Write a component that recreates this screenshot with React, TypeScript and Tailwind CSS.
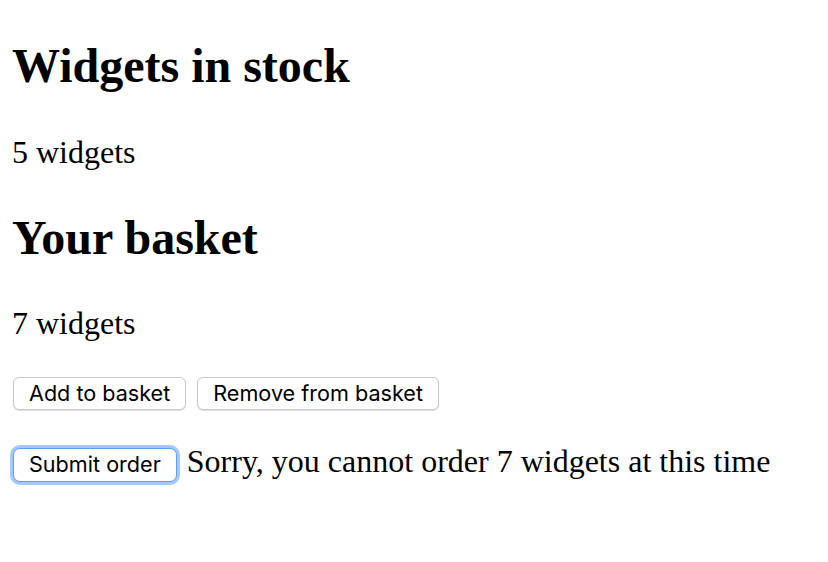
import React, { useState } from "react";

const serif = { fontFamily: '"Liberation Serif", "Times New Roman", serif' };

function Btn({ children, focused }: { children: React.ReactNode; focused?: boolean }) {
  return (
    <button
      className={
        focused
          ? "h-[34px] rounded-[7px] border border-[#5e9df2] bg-white px-[15px] text-[21.6px] leading-none text-black shadow-[0_0_0_3px_#a6c8f8]"
          : "h-[33px] rounded-[6px] border border-[#c9c9c9] bg-white px-[15px] text-[21.6px] leading-none text-black shadow-[0_1px_1px_rgba(0,0,0,0.12)]"
      }
      style={{ fontFamily: 'Inter, "Liberation Sans", sans-serif' }}
    >
      {children}
    </button>
  );
}

export default function App() {
  const [stock] = useState(5);
  const [basket] = useState(7);
  return (
    <div className="min-h-[562px] bg-white px-[12px] pt-[38px] text-black" style={serif}>
      <h1 className="text-[48px] font-bold leading-[56px]">Widgets in stock</h1>
      <p className="mt-[40px] text-[32px] leading-[37px]">{stock} widgets</p>
      <h1 className="mt-[39px] text-[48px] font-bold leading-[56px]">Your basket</h1>
      <p className="mt-[39px] text-[32px] leading-[37px]">{basket} widgets</p>
      <div className="mt-[35px] flex items-center gap-[11px] pl-[1px]">
        <Btn>Add to basket</Btn>
        <Btn>Remove from basket</Btn>
      </div>
      <div className="mt-[33px] flex items-baseline gap-[10px] pl-[1px]">
        <Btn focused>Submit order</Btn>
        <span className="text-[32px] leading-[37px]">
          Sorry, you cannot order {basket} widgets at this time
        </span>
      </div>
    </div>
  );
}
